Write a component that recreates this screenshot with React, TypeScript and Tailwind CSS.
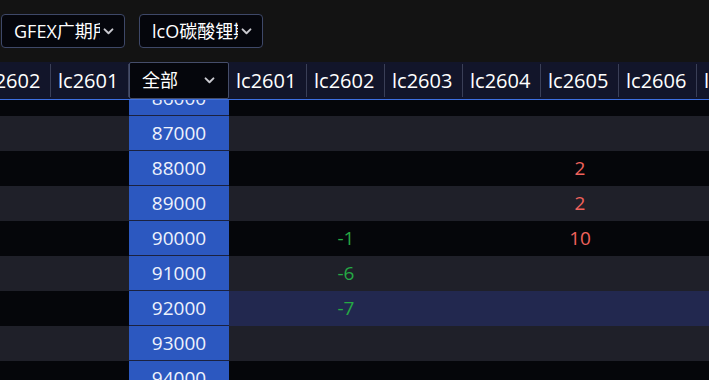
import * as React from 'react';

const FONT = { fontFamily: '"Open Sans", "Noto Sans CJK SC", sans-serif' };

const callCols = ['lc2602', 'lc2601'];
const putCols = ['lc2601', 'lc2602', 'lc2603', 'lc2604', 'lc2605', 'lc2606', 'lc2607'];
const strikes = Array.from({ length: 16 }, (_, i) => 80000 + i * 1000);

// net change per strike / contract
const values: Record<number, Record<string, number>> = {
  88000: { lc2605: 2 },
  89000: { lc2605: 2 },
  90000: { lc2602: -1, lc2605: 10 },
  91000: { lc2602: -6 },
  92000: { lc2602: -7 },
};
const activeStrike = 92000;

function Chevron({ className = '' }: { className?: string }) {
  return (
    <svg viewBox="0 0 12 8" className={`w-[11px] h-[7px] ${className}`} fill="none">
      <polyline points="1.5,1.5 6,6 10.5,1.5" stroke="currentColor" strokeWidth="2.2" strokeLinecap="round" strokeLinejoin="round" />
    </svg>
  );
}

function TopSelect({ label }: { label: string }) {
  return (
    <div className="flex items-center w-[124px] h-[34px] rounded-[4px] border border-[#3e4868] bg-[#05060c] pl-[12px] pr-[10px]">
      <span className="flex-1 overflow-hidden whitespace-nowrap text-[18px] text-white">{label}</span>
      <Chevron className="ml-[3px] shrink-0 text-[#c9c9cf]" />
    </div>
  );
}

export default function App() {
  const scrollRef = React.useRef<HTMLDivElement>(null);

  React.useEffect(() => {
    const el = scrollRef.current;
    if (!el) return;
    el.scrollLeft = 27;
    el.scrollTop = 229;
  }, []);

  return (
    <div className="w-[709px] h-[380px] bg-[#131313] flex flex-col overflow-hidden" style={FONT}>
      <div className="h-[62px] shrink-0 flex items-start gap-[14px] pt-[14px] pl-[1px]">
        <TopSelect label="GFEX广期所" />
        <TopSelect label="lcO碳酸锂期权" />
      </div>

      <div ref={scrollRef} className="flex-1 overflow-hidden">
        <div className="w-max">
          <div className="sticky top-0 z-10 flex h-[38px] bg-[#12152a] border-b border-[#3d6fe0] text-[20px] text-white">
            {callCols.map((c) => (
              <div key={'h-c-' + c} className="w-[78px] flex items-center">
                <div className="flex-1 pl-[7px]">{c}</div>
                <div className="w-px h-[33px] bg-[#3a3f57]" />
              </div>
            ))}
            <div className="w-[100px] h-[37px] flex items-center justify-between border border-[#454d6a] rounded-[2px] bg-[#05060c] pl-[12px] pr-[13px] text-[18px]">
              <span>全部</span>
              <Chevron className="text-[#c9c9cf]" />
            </div>
            {putCols.map((c) => (
              <div key={'h-p-' + c} className="w-[78px] flex items-center">
                <div className="flex-1 pl-[7px]">{c}</div>
                <div className="w-px h-[33px] bg-[#3a3f57]" />
              </div>
            ))}
          </div>

          {strikes.map((s, i) => {
            const base = i % 2 === 1 ? 'bg-[#1f2029]' : 'bg-[#05060a]';
            const right = s === activeStrike ? 'bg-[#22284f]' : base;
            const row = values[s] || {};
            return (
              <div key={s} className="flex h-[35px] text-[19px]">
                <div className={`flex ${base}`}>
                  {callCols.map((c) => (
                    <div key={c} className="w-[78px]" />
                  ))}
                </div>
                <div className="w-[100px] flex items-center justify-center bg-[#2c58c0] border-b border-[#1b2240] text-[#eef2fc]">
                  {s}
                </div>
                <div className={`flex ${right}`}>
                  {putCols.map((c) => {
                    const v = row[c];
                    return (
                      <div
                        key={c}
                        className={`w-[78px] flex items-center justify-center ${v !== undefined && v < 0 ? 'text-[#25a944]' : 'text-[#f0625c]'}`}
                      >
                        {v !== undefined ? v : ''}
                      </div>
                    );
                  })}
                </div>
              </div>
            );
          })}
        </div>
      </div>
    </div>
  );
}
